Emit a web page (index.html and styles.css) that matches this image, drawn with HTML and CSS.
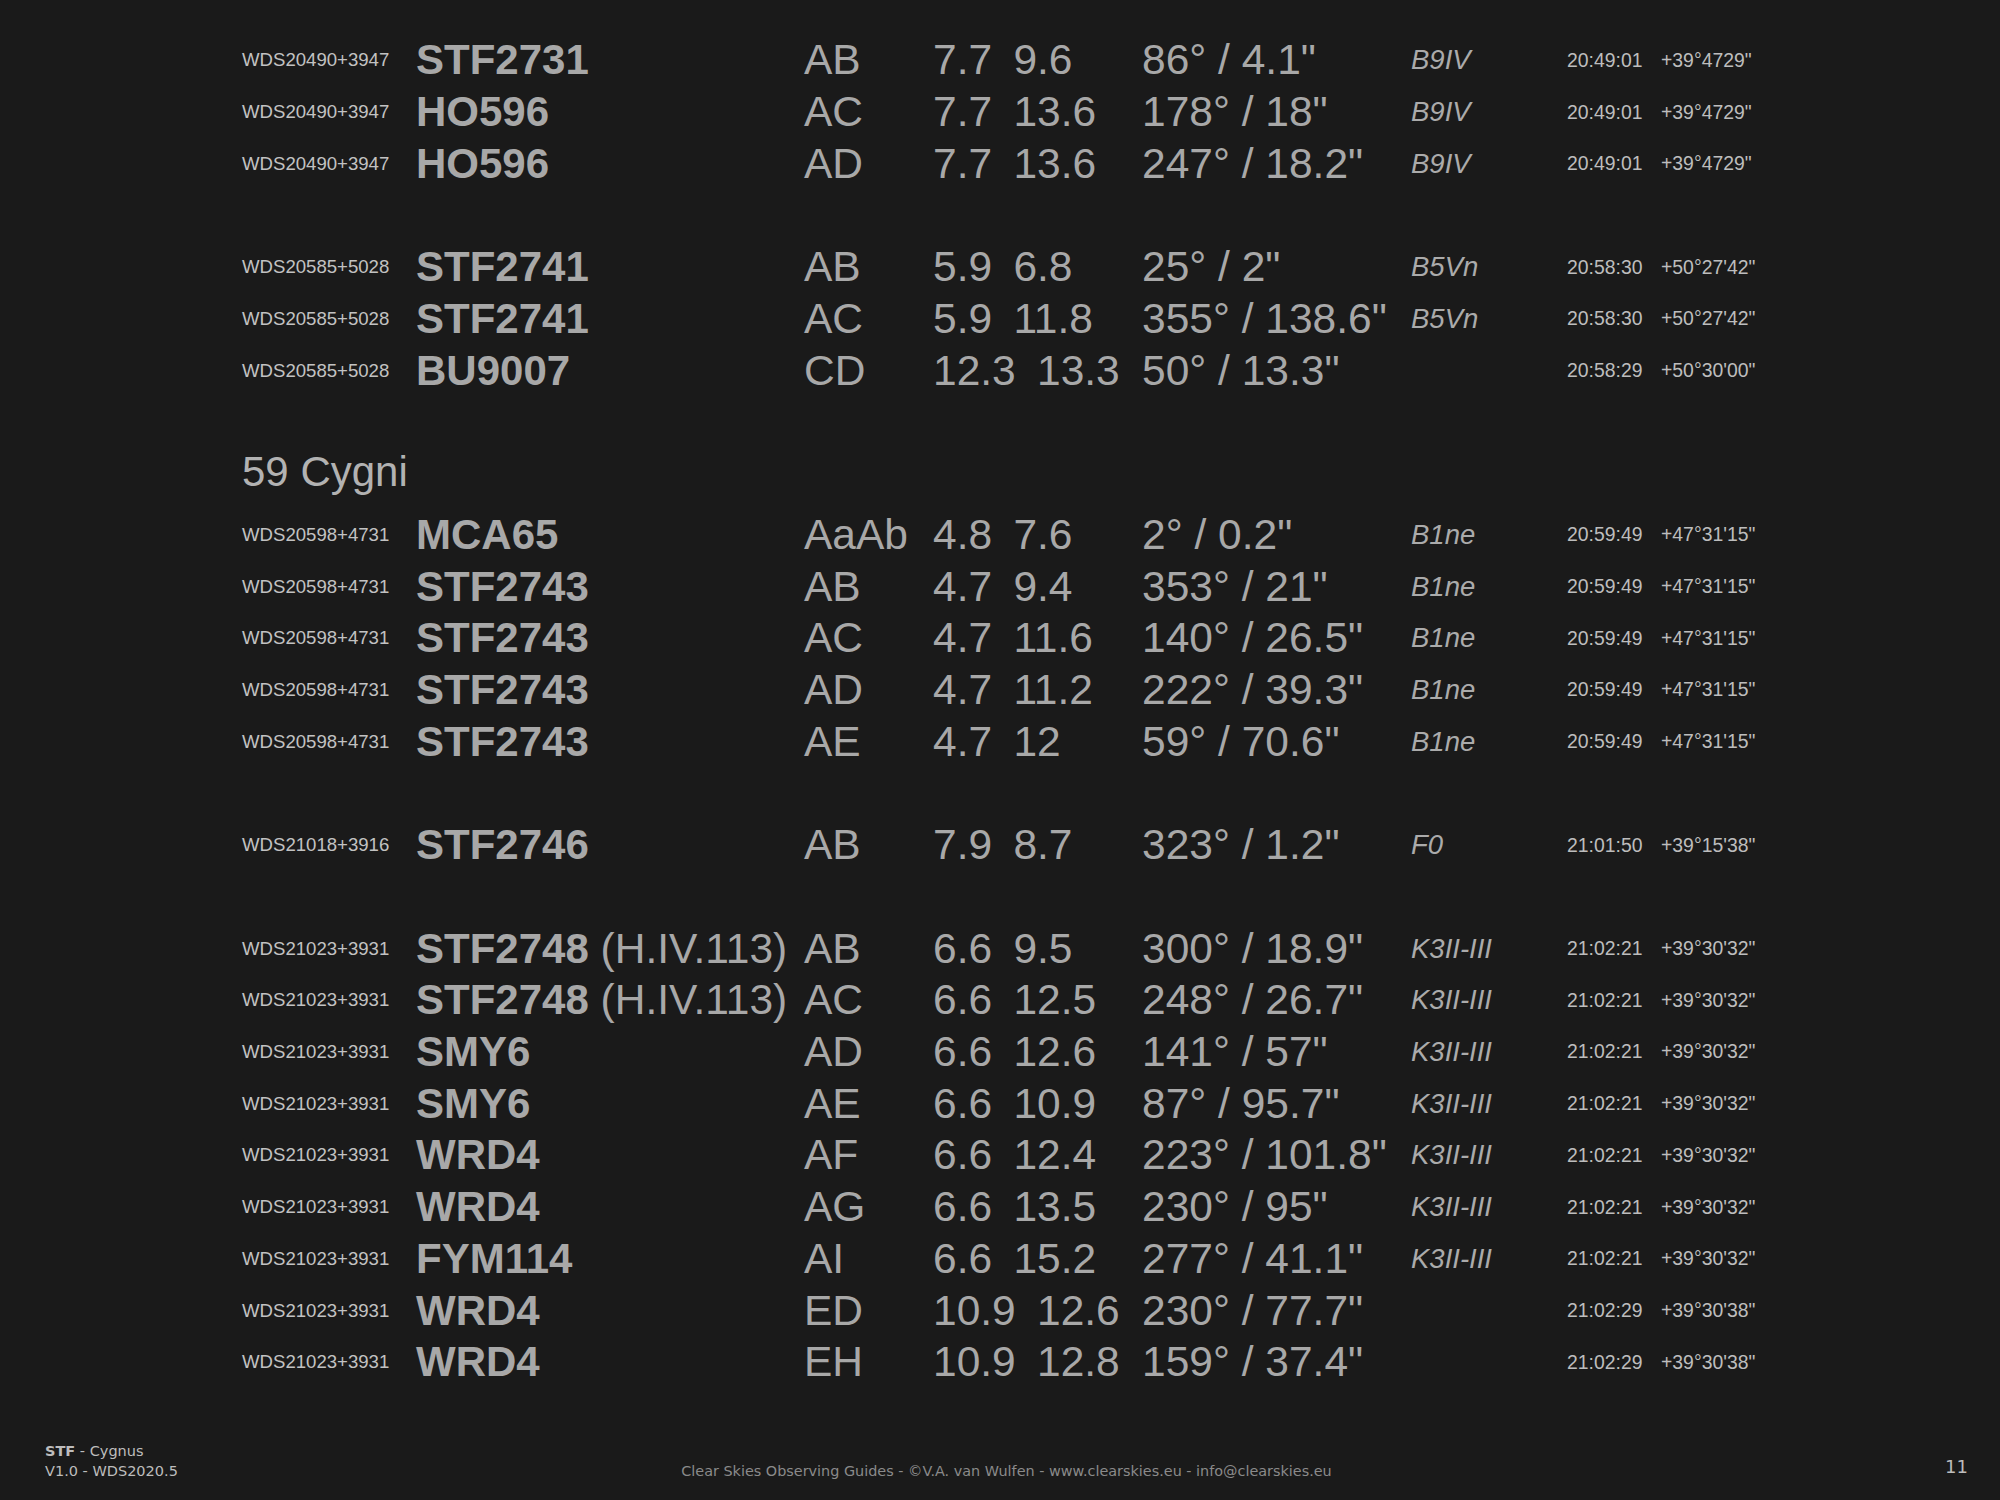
FILE: index.html
```html
<!DOCTYPE html>
<html>
<head>
<meta charset="utf-8">
<link rel="stylesheet" href="styles.css">
</head>
<body>
<div class="page">
  <div class="list">
    <div class="row"><span class="wds">WDS20490+3947</span><span class="name"><b>STF2731</b></span><span class="comp">AB</span><span class="mags"><span class="m1">7.7</span><span class="m2">9.6</span></span><span class="pa">86° / 4.1"</span><span class="spec">B9IV</span><span class="ra">20:49:01</span><span class="dec">+39°4729"</span></div>
    <div class="row"><span class="wds">WDS20490+3947</span><span class="name"><b>HO596</b></span><span class="comp">AC</span><span class="mags"><span class="m1">7.7</span><span class="m2">13.6</span></span><span class="pa">178° / 18"</span><span class="spec">B9IV</span><span class="ra">20:49:01</span><span class="dec">+39°4729"</span></div>
    <div class="row"><span class="wds">WDS20490+3947</span><span class="name"><b>HO596</b></span><span class="comp">AD</span><span class="mags"><span class="m1">7.7</span><span class="m2">13.6</span></span><span class="pa">247° / 18.2"</span><span class="spec">B9IV</span><span class="ra">20:49:01</span><span class="dec">+39°4729"</span></div>
    <div class="row blank"></div>
    <div class="row"><span class="wds">WDS20585+5028</span><span class="name"><b>STF2741</b></span><span class="comp">AB</span><span class="mags"><span class="m1">5.9</span><span class="m2">6.8</span></span><span class="pa">25° / 2"</span><span class="spec">B5Vn</span><span class="ra">20:58:30</span><span class="dec">+50°27'42"</span></div>
    <div class="row"><span class="wds">WDS20585+5028</span><span class="name"><b>STF2741</b></span><span class="comp">AC</span><span class="mags"><span class="m1">5.9</span><span class="m2">11.8</span></span><span class="pa">355° / 138.6"</span><span class="spec">B5Vn</span><span class="ra">20:58:30</span><span class="dec">+50°27'42"</span></div>
    <div class="row"><span class="wds">WDS20585+5028</span><span class="name"><b>BU9007</b></span><span class="comp">CD</span><span class="mags"><span class="m1">12.3</span><span class="m2">13.3</span></span><span class="pa">50° / 13.3"</span><span class="spec"></span><span class="ra">20:58:29</span><span class="dec">+50°30'00"</span></div>
    <div class="row blank"></div>
    <div class="heading">59 Cygni</div>
    <div class="row"><span class="wds">WDS20598+4731</span><span class="name"><b>MCA65</b></span><span class="comp">AaAb</span><span class="mags"><span class="m1">4.8</span><span class="m2">7.6</span></span><span class="pa">2° / 0.2"</span><span class="spec">B1ne</span><span class="ra">20:59:49</span><span class="dec">+47°31'15"</span></div>
    <div class="row"><span class="wds">WDS20598+4731</span><span class="name"><b>STF2743</b></span><span class="comp">AB</span><span class="mags"><span class="m1">4.7</span><span class="m2">9.4</span></span><span class="pa">353° / 21"</span><span class="spec">B1ne</span><span class="ra">20:59:49</span><span class="dec">+47°31'15"</span></div>
    <div class="row"><span class="wds">WDS20598+4731</span><span class="name"><b>STF2743</b></span><span class="comp">AC</span><span class="mags"><span class="m1">4.7</span><span class="m2">11.6</span></span><span class="pa">140° / 26.5"</span><span class="spec">B1ne</span><span class="ra">20:59:49</span><span class="dec">+47°31'15"</span></div>
    <div class="row"><span class="wds">WDS20598+4731</span><span class="name"><b>STF2743</b></span><span class="comp">AD</span><span class="mags"><span class="m1">4.7</span><span class="m2">11.2</span></span><span class="pa">222° / 39.3"</span><span class="spec">B1ne</span><span class="ra">20:59:49</span><span class="dec">+47°31'15"</span></div>
    <div class="row"><span class="wds">WDS20598+4731</span><span class="name"><b>STF2743</b></span><span class="comp">AE</span><span class="mags"><span class="m1">4.7</span><span class="m2">12</span></span><span class="pa">59° / 70.6"</span><span class="spec">B1ne</span><span class="ra">20:59:49</span><span class="dec">+47°31'15"</span></div>
    <div class="row blank"></div>
    <div class="row"><span class="wds">WDS21018+3916</span><span class="name"><b>STF2746</b></span><span class="comp">AB</span><span class="mags"><span class="m1">7.9</span><span class="m2">8.7</span></span><span class="pa">323° / 1.2"</span><span class="spec">F0</span><span class="ra">21:01:50</span><span class="dec">+39°15'38"</span></div>
    <div class="row blank"></div>
    <div class="row"><span class="wds">WDS21023+3931</span><span class="name"><b>STF2748</b> (H.IV.113)</span><span class="comp">AB</span><span class="mags"><span class="m1">6.6</span><span class="m2">9.5</span></span><span class="pa">300° / 18.9"</span><span class="spec">K3II-III</span><span class="ra">21:02:21</span><span class="dec">+39°30'32"</span></div>
    <div class="row"><span class="wds">WDS21023+3931</span><span class="name"><b>STF2748</b> (H.IV.113)</span><span class="comp">AC</span><span class="mags"><span class="m1">6.6</span><span class="m2">12.5</span></span><span class="pa">248° / 26.7"</span><span class="spec">K3II-III</span><span class="ra">21:02:21</span><span class="dec">+39°30'32"</span></div>
    <div class="row"><span class="wds">WDS21023+3931</span><span class="name"><b>SMY6</b></span><span class="comp">AD</span><span class="mags"><span class="m1">6.6</span><span class="m2">12.6</span></span><span class="pa">141° / 57"</span><span class="spec">K3II-III</span><span class="ra">21:02:21</span><span class="dec">+39°30'32"</span></div>
    <div class="row"><span class="wds">WDS21023+3931</span><span class="name"><b>SMY6</b></span><span class="comp">AE</span><span class="mags"><span class="m1">6.6</span><span class="m2">10.9</span></span><span class="pa">87° / 95.7"</span><span class="spec">K3II-III</span><span class="ra">21:02:21</span><span class="dec">+39°30'32"</span></div>
    <div class="row"><span class="wds">WDS21023+3931</span><span class="name"><b>WRD4</b></span><span class="comp">AF</span><span class="mags"><span class="m1">6.6</span><span class="m2">12.4</span></span><span class="pa">223° / 101.8"</span><span class="spec">K3II-III</span><span class="ra">21:02:21</span><span class="dec">+39°30'32"</span></div>
    <div class="row"><span class="wds">WDS21023+3931</span><span class="name"><b>WRD4</b></span><span class="comp">AG</span><span class="mags"><span class="m1">6.6</span><span class="m2">13.5</span></span><span class="pa">230° / 95"</span><span class="spec">K3II-III</span><span class="ra">21:02:21</span><span class="dec">+39°30'32"</span></div>
    <div class="row"><span class="wds">WDS21023+3931</span><span class="name"><b>FYM114</b></span><span class="comp">AI</span><span class="mags"><span class="m1">6.6</span><span class="m2">15.2</span></span><span class="pa">277° / 41.1"</span><span class="spec">K3II-III</span><span class="ra">21:02:21</span><span class="dec">+39°30'32"</span></div>
    <div class="row"><span class="wds">WDS21023+3931</span><span class="name"><b>WRD4</b></span><span class="comp">ED</span><span class="mags"><span class="m1">10.9</span><span class="m2">12.6</span></span><span class="pa">230° / 77.7"</span><span class="spec"></span><span class="ra">21:02:29</span><span class="dec">+39°30'38"</span></div>
    <div class="row"><span class="wds">WDS21023+3931</span><span class="name"><b>WRD4</b></span><span class="comp">EH</span><span class="mags"><span class="m1">10.9</span><span class="m2">12.8</span></span><span class="pa">159° / 37.4"</span><span class="spec"></span><span class="ra">21:02:29</span><span class="dec">+39°30'38"</span></div>
  </div>
  <div class="footer">
    <div class="foot-left">
      <div><b>STF</b> - Cygnus</div>
      <div>V1.0 - WDS2020.5</div>
    </div>
    <div class="foot-center">Clear Skies Observing Guides - ©V.A. van Wulfen - www.clearskies.eu - info@clearskies.eu</div>
    <div class="foot-right">11</div>
  </div>
</div>
</body>
</html>
```

FILE: styles.css
```css
html, body {
  margin: 0;
  padding: 0;
  background: #1a1a1a;
}

.page {
  width: 2000px;
  height: 1500px;
  display: flex;
  flex-direction: column;
  font-family: "Liberation Sans", Arial, sans-serif;
  color: #a8a8a8;
  box-sizing: border-box;
}

.list {
  padding: 34.5px 0 0 242px;
  display: flex;
  flex-direction: column;
}

.row {
  height: 51.73px;
  display: flex;
  align-items: center;
  white-space: nowrap;
}

.row > span {
  display: block;
  flex: none;
}

.wds {
  width: 174px;
  font-size: 18.6px;
  color: #c2c2c2;
}

.name {
  width: 388px;
  font-size: 42.5px;
  color: #a8a8a8;
}

.name b {
  font-weight: 700;
  font-size: 42px;
}

.comp {
  width: 129px;
  font-size: 42.5px;
}

.mags {
  width: 209px;
  display: flex;
  font-size: 42.5px;
}

.m1 {
  min-width: 62.7px;
  margin-right: 21.3px;
}

.pa {
  width: 269px;
  font-size: 42.5px;
}

.spec {
  width: 156px;
  font-size: 27.5px;
  font-style: italic;
  color: #ababab;
}

.ra {
  width: 94px;
  font-size: 19.4px;
  color: #bdbdbd;
}

.dec {
  font-size: 19.4px;
  color: #bdbdbd;
}

.heading {
  height: 48.6px;
  line-height: 48.6px;
  margin-bottom: 12.1px;
  font-size: 42px;
  color: #b2b2b2;
}

.footer {
  margin-top: auto;
  padding: 0 32px 19px 45px;
  display: grid;
  grid-template-columns: 1fr auto 1fr;
  align-items: end;
  font-family: "DejaVu Sans", Verdana, sans-serif;
  font-size: 14.5px;
  line-height: 20px;
}

.foot-left {
  color: #bdbdbd;
}

.foot-left b {
  font-weight: 700;
}

.foot-center {
  color: #8a8a8a;
  font-size: 14.4px;
}

.foot-right {
  justify-self: end;
  font-size: 18px;
  color: #bdbdbd;
  padding-bottom: 4px;
}
```
